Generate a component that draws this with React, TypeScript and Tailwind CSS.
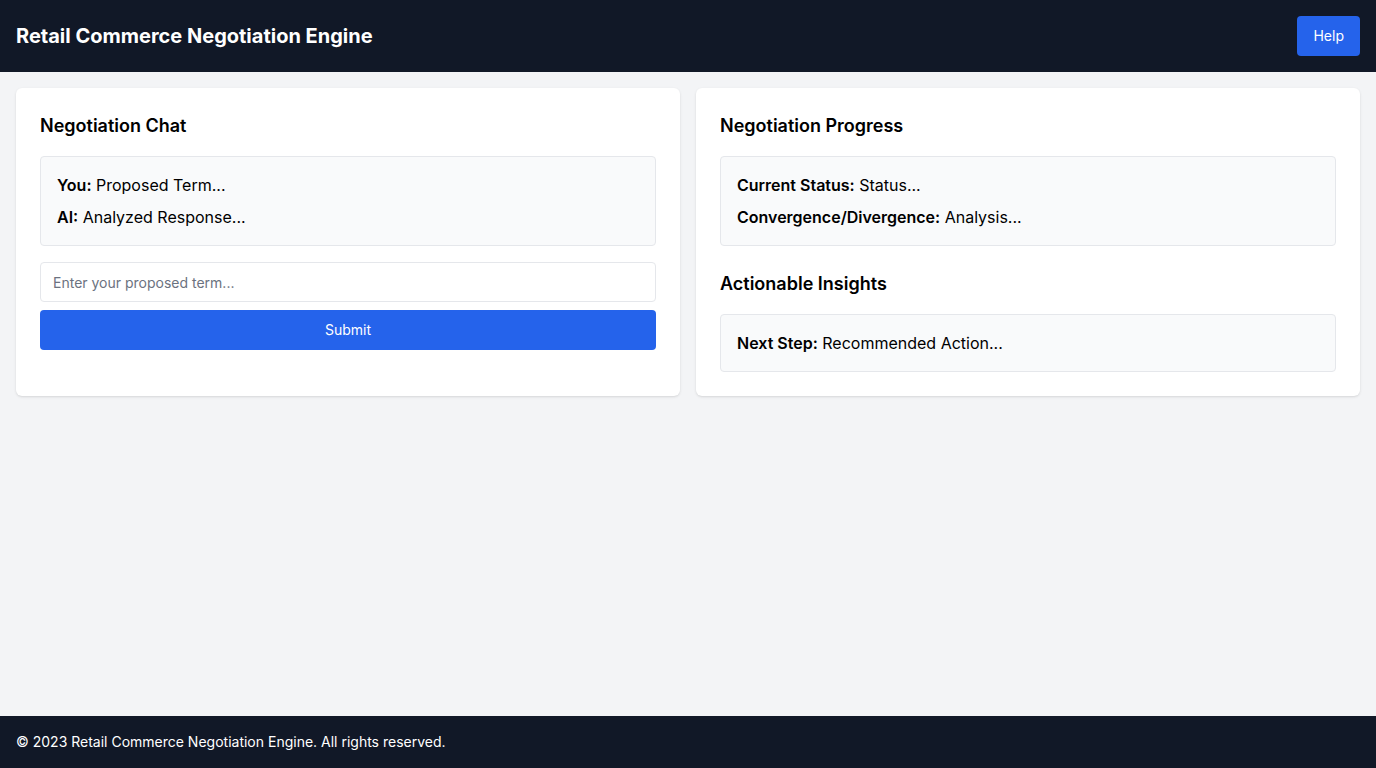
export default function App() {
  return (
    <div className="flex min-h-screen flex-col bg-[#f3f4f6] font-['Inter','Noto_Sans',sans-serif] text-black">
      <header className="flex items-center justify-between bg-[#111827] p-4">
        <h1 className="text-xl font-bold text-white">Retail Commerce Negotiation Engine</h1>
        <button className="h-10 rounded bg-[#2563eb] px-4 text-sm text-white">Help</button>
      </header>

      <main className="grid flex-1 grid-cols-2 content-start gap-4 p-4">
        <section className="rounded-md bg-white p-6 shadow">
          <h2 className="mb-4 text-lg font-semibold">Negotiation Chat</h2>
          <div className="space-y-2 rounded border border-[#e5e7eb] bg-[#f9fafb] p-4">
            <p><span className="font-semibold">You:</span> Proposed Term...</p>
            <p><span className="font-semibold">AI:</span> Analyzed Response...</p>
          </div>
          <div className="mt-4">
            <input
              type="text"
              placeholder="Enter your proposed term..."
              className="h-10 w-full rounded border border-[#e5e7eb] px-3 text-sm placeholder:text-[#6b7280] focus:outline-none"
            />
            <button className="mt-2 h-10 w-full rounded bg-[#2563eb] text-sm text-white">Submit</button>
          </div>
        </section>

        <section className="rounded-md bg-white p-6 shadow">
          <h2 className="mb-4 text-lg font-semibold">Negotiation Progress</h2>
          <div className="space-y-2 rounded border border-[#e5e7eb] bg-[#f9fafb] p-4">
            <p><span className="font-semibold">Current Status:</span> Status...</p>
            <p><span className="font-semibold">Convergence/Divergence:</span> Analysis...</p>
          </div>
          <h2 className="mb-4 mt-6 text-lg font-semibold">Actionable Insights</h2>
          <div className="rounded border border-[#e5e7eb] bg-[#f9fafb] p-4">
            <p><span className="font-semibold">Next Step:</span> Recommended Action...</p>
          </div>
        </section>
      </main>

      <footer className="bg-[#111827] p-4 text-sm text-white">
        © 2023 Retail Commerce Negotiation Engine. All rights reserved.
      </footer>
    </div>
  );
}
